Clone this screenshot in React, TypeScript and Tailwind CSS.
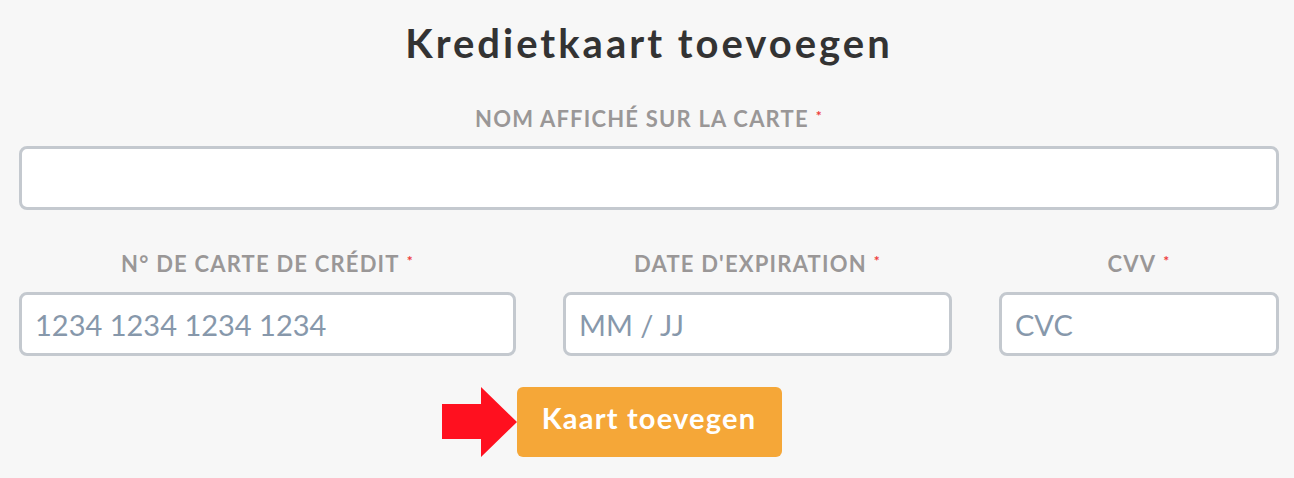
function Label({ text }: { text: string }) {
  return (
    <label className="block text-center text-[22px] font-bold uppercase leading-[24px] tracking-[1.2px] text-[#9a9797]">
      {text}
      <span className="relative top-[2px] ml-[7px] align-top text-[14px] leading-[14px] text-[#ee3b3b]">*</span>
    </label>
  )
}

function Field({ placeholder }: { placeholder?: string }) {
  return (
    <input
      type="text"
      placeholder={placeholder}
      className="block h-[64px] w-full rounded-[8px] border-[3px] border-[#c4c9cf] bg-white px-[13px] text-[29px] text-[#333] outline-none placeholder:text-[#8798ab]"
    />
  )
}

export default function App() {
  return (
    <div className="min-h-[478px] bg-[#f7f7f7] pl-[19px] pr-[15px] font-['Lato',sans-serif]">
      <h1 className="pt-[19px] text-center text-[40px] font-bold leading-[48px] tracking-[3px] text-[#333]">
        Kredietkaart toevoegen
      </h1>

      <div className="mt-[40px]">
        <Label text="Nom affiché sur la carte" />
        <div className="mt-[15px]">
          <Field />
        </div>
      </div>

      <div className="mt-[42px] grid grid-cols-[497px_389px_1fr] gap-x-[47px]">
        <div>
          <Label text="N° de carte de crédit" />
          <div className="mt-[16px]">
            <Field placeholder="1234 1234 1234 1234" />
          </div>
        </div>
        <div>
          <Label text="Date d'expiration" />
          <div className="mt-[16px]">
            <Field placeholder="MM / JJ" />
          </div>
        </div>
        <div>
          <Label text="CVV" />
          <div className="mt-[16px]">
            <Field placeholder="CVC" />
          </div>
        </div>
      </div>

      <div className="mt-[31px] flex justify-center pb-[20px]">
        <div className="relative">
          {/* pointer arrow */}
          <svg
            className="absolute right-full top-0 h-[70px] w-[75px]"
            viewBox="0 0 75 70"
          >
            <path d="M0 17h39V0l36 35-36 35V52H0z" fill="#ff101f" />
          </svg>
          <button className="h-[70px] w-[265px] rounded-[6px] bg-[#f5a738] pb-[8px] text-[29px] font-bold tracking-[1.2px] text-white">
            Kaart toevegen
          </button>
        </div>
      </div>
    </div>
  )
}
